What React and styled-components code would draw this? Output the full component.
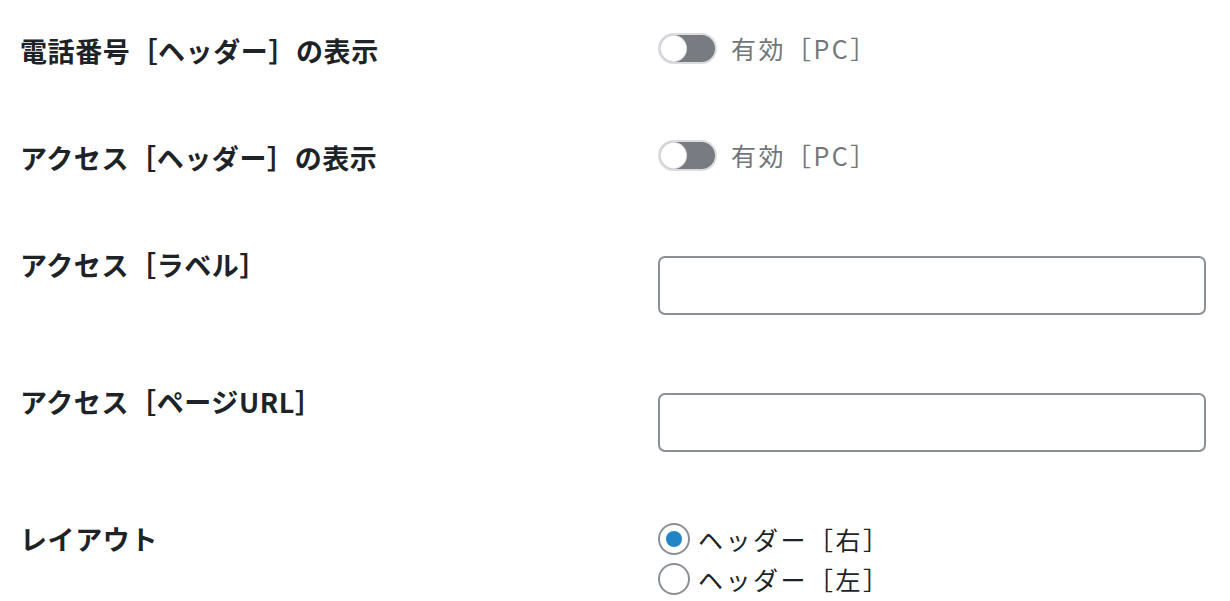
import React from 'react';
import styled, { createGlobalStyle } from 'styled-components';

const GlobalStyle = createGlobalStyle`
  body {
    margin: 0;
    background: #ffffff;
    font-family: "Noto Sans CJK JP", "Noto Sans", sans-serif;
    color: #1d2327;
  }
`
const Table = styled.div`
  padding-left: 20px;
  width: 1186px;
`
const Row = styled.div`
  display: grid;
  grid-template-columns: 638px 548px;
  align-items: start;
  padding: 32px 0 39px;
`
const Label = styled.div`
  padding-top: 1px;
  font-size: 27px;
  font-weight: 700;
  line-height: 35px;
  color: #1d2327;
  letter-spacing: 0.6px;
`
const Field = styled.div`
  display: flex;
  align-items: center;
  gap: 14px;
  height: 32px;
`
const Toggle = styled.span`
  position: relative;
  box-sizing: border-box;
  width: 59px;
  height: 31px;
  border-radius: 16px;
  border: 2px solid #dcdcde;
  background: #787c82;
  flex-shrink: 0;
`
const Knob = styled.span`
  position: absolute;
  top: 1px;
  left: 1px;
  width: 25px;
  height: 25px;
  border-radius: 50%;
  background: #ffffff;
  box-shadow: 0 0 0 1px #e2e4e7;
`
const ToggleText = styled.span`
  font-size: 25px;
  color: #72767b;
  line-height: 32px;
  letter-spacing: 2.5px;
`
const Input = styled.input`
  box-sizing: border-box;
  width: 548px;
  height: 59px;
  margin: 10px 0 -3px;
  border: 2px solid #8c8f94;
  border-radius: 7px;
  background: #fff;
  outline: none;
`
const RadioList = styled.div`
  display: flex;
  flex-direction: column;
  margin-top: -1px;
`
const RadioItem = styled.label`
  display: flex;
  align-items: center;
  gap: 8px;
  height: 40px;
  font-size: 25px;
  color: #1d2327;
  letter-spacing: 2.5px;
`
const RadioCircle = styled.span`
  box-sizing: border-box;
  width: 32px;
  height: 32px;
  border-radius: 50%;
  border: 2px solid #8c8f94;
  background: #fff;
  display: flex;
  align-items: center;
  justify-content: center;
  flex-shrink: 0;
  &::after {
    content: '';
    width: 16px;
    height: 16px;
    border-radius: 50%;
    background: ${p => (p.$checked ? '#2185c5' : 'transparent')};
  }
`

function ToggleField() {
  return (
    <Field>
      <Toggle><Knob /></Toggle>
      <ToggleText>有効［PC］</ToggleText>
    </Field>
  )
}

export default function App() {
  return (
    <>
      <GlobalStyle />
      <Table>
        <Row>
          <Label>電話番号［ヘッダー］の表示</Label>
          <ToggleField />
        </Row>
        <Row>
          <Label>アクセス［ヘッダー］の表示</Label>
          <ToggleField />
        </Row>
        <Row>
          <Label>アクセス［ラベル］</Label>
          <Input type="text" />
        </Row>
        <Row>
          <Label>アクセス［ページURL］</Label>
          <Input type="text" />
        </Row>
        <Row>
          <Label>レイアウト</Label>
          <RadioList>
            <RadioItem><RadioCircle $checked />ヘッダー［右］</RadioItem>
            <RadioItem><RadioCircle />ヘッダー［左］</RadioItem>
          </RadioList>
        </Row>
      </Table>
    </>
  )
}
